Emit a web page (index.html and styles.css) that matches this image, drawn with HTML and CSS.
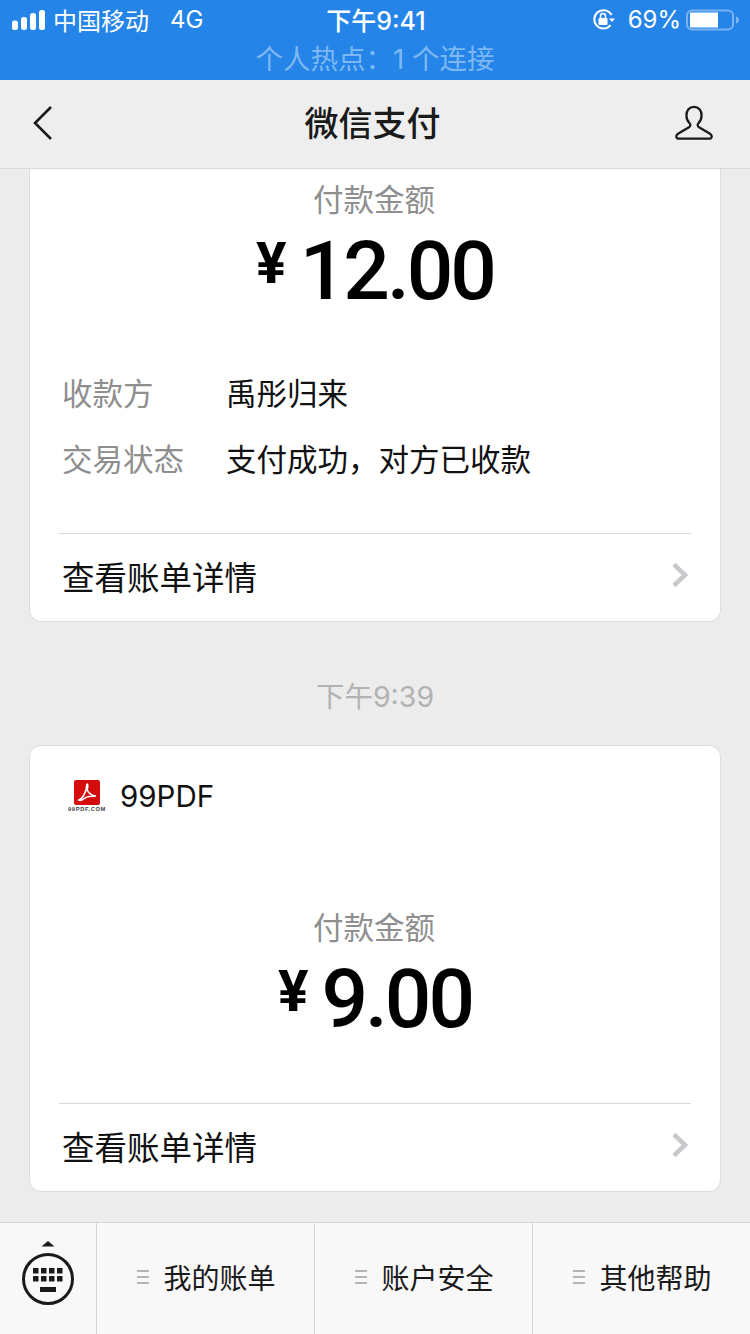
FILE: index.html
```html
<!DOCTYPE html>
<html lang="zh-CN">
<head>
    <meta charset="UTF-8">
    <meta name="viewport" content="width=device-width, initial-scale=1.0">
    <title>微信支付</title>
    <link rel="stylesheet" href="styles.css">
</head>
<body>
    <div id="phone">
        <div id="topbar">
            <div id="status">
                <div class="status-left">
                    <svg class="signal" width="34" height="24" viewBox="0 0 34 24">
                        <rect x="0" y="13.500" width="6" height="9.500" rx="2.500" fill="#fff"/>
                        <rect x="9" y="10" width="6" height="13" rx="2.500" fill="#fff"/>
                        <rect x="18" y="6" width="6" height="17" rx="2.500" fill="#fff"/>
                        <rect x="27" y="3" width="6" height="20" rx="2.500" fill="#fff"/>
                    </svg>
                    <span class="carrier">中国移动</span>
                    <span class="net">4G</span>
                </div>
                <div class="clock">下午9:41</div>
                <div class="status-right">
                    <svg class="status-icon" width="24" height="24" viewBox="0 0 24 24">
                        <path d="M18.6 17.2A9.2 9.2 0 1 1 19.6 7" fill="none" stroke="#fff" stroke-width="2"/>
                        <path d="M17 10.500h6l-3 3.600z" fill="#fff"/>
                        <rect x="6.500" y="10" width="9" height="7" rx="1" fill="#fff"/>
                        <path d="M8.500 10V8a2.500 2.500 0 0 1 5 0v2" fill="none" stroke="#fff" stroke-width="1.500"/>
                    </svg>
                    <span class="percent">69%</span>
                    <svg class="status-icon" width="54" height="24" viewBox="0 0 54 24">
                        <rect x="1" y="2.500" width="46" height="19" rx="5" fill="none" stroke="#7db4f0" stroke-width="2"/>
                        <rect x="4" y="4.500" width="28" height="15" fill="#fff"/>
                        <path d="M50 8.500c2 .6 3 1.800 3 3.500s-1 2.900-3 3.500z" fill="#7db4f0"/>
                    </svg>
                </div>
            </div>
            <div id="hotspot">个人热点：1 个连接</div>
        </div>

        <div id="nav">
            <svg class="nav-back" width="22" height="36" viewBox="0 0 22 36">
                <path d="M19 2 3 18l16 16" fill="none" stroke="#1a1a1a" stroke-width="2.600"/>
            </svg>
            <div class="nav-title">微信支付</div>
            <svg class="nav-user" width="38" height="36" viewBox="0 0 40 38">
                <path d="M20 2c-5 0-8 3.800-8 9 0 3.500 1.500 6.500 3.500 8.500 1 1 .8 3-.8 4L3.500 30c-2 1.200-2.500 3-1.800 4.500.3.700 1 1 2 1h32.600c1 0 1.700-.3 2-1 .7-1.500.2-3.300-1.800-4.500l-11.200-6.500c-1.600-1-1.800-3-.8-4C26.500 17.500 28 14.500 28 11c0-5.200-3-9-8-9z" fill="none" stroke="#1a1a1a" stroke-width="2.400"/>
            </svg>
        </div>

        <div id="messages">
            <div class="card card-cut">
                <div class="amount-block first">
                    <div class="amount-label">付款金额</div>
                    <div class="amount"><span class="yen">¥</span>12.00</div>
                </div>
                <div class="details">
                    <div class="detail-row"><span class="detail-key">收款方</span><span>禹彤归来</span></div>
                    <div class="detail-row"><span class="detail-key">交易状态</span><span>支付成功，对方已收款</span></div>
                </div>
                <div class="card-link">
                    <span>查看账单详情</span>
                    <svg width="18" height="26" viewBox="0 0 18 26"><path d="M3 2.500 14 13 3 23.500" fill="none" stroke="#c8c8cd" stroke-width="4.500"/></svg>
                </div>
            </div>

            <div class="time">下午9:39</div>

            <div class="card">
                <div class="merchant">
                    <div class="logo">
                        <svg width="26" height="25" viewBox="0 0 26 25">
                            <rect width="26" height="25" rx="2" fill="#d40c0c"/>
                            <path d="M5 20c3-1.500 5.500-5.500 7-10 .6-2 .4-6 1.200-6s.6 4 0 6c1.500 3.500 3.800 5.500 8.800 6-4.500 0-9 .6-11 2-1.800 1.400-3.700 3.300-6 2z" fill="none" stroke="#fff" stroke-width="1.600"/>
                        </svg>
                        <span class="logo-text">99PDF.COM</span>
                    </div>
                    <span class="merchant-name">99PDF</span>
                </div>
                <div class="amount-block second">
                    <div class="amount-label">付款金额</div>
                    <div class="amount"><span class="yen">¥</span>9.00</div>
                </div>
                <div class="card-link">
                    <span>查看账单详情</span>
                    <svg width="18" height="26" viewBox="0 0 18 26"><path d="M3 2.500 14 13 3 23.500" fill="none" stroke="#c8c8cd" stroke-width="4.500"/></svg>
                </div>
            </div>
        </div>

        <div id="footer">
            <div class="keyboard">
                <svg width="56" height="78" viewBox="0 0 56 78">
                    <path d="M28 1l6.500 5.500h-13z" fill="#1a1a1a"/>
                    <circle cx="28" cy="39" r="24.500" fill="none" stroke="#1a1a1a" stroke-width="3"/>
                    <g fill="#1a1a1a">
                        <rect x="13" y="28" width="5.500" height="5.500"/><rect x="21" y="28" width="5.500" height="5.500"/><rect x="29" y="28" width="5.500" height="5.500"/><rect x="37" y="28" width="5.500" height="5.500"/>
                        <rect x="13" y="36" width="5.500" height="5.500"/><rect x="21" y="36" width="5.500" height="5.500"/><rect x="29" y="36" width="5.500" height="5.500"/><rect x="37" y="36" width="5.500" height="5.500"/>
                        <rect x="20" y="47" width="16" height="5"/>
                    </g>
                </svg>
            </div>
            <div class="menu-item"><span class="menu-lines"></span>我的账单</div>
            <div class="menu-item"><span class="menu-lines"></span>账户安全</div>
            <div class="menu-item"><span class="menu-lines"></span>其他帮助</div>
        </div>
    </div>
</body>
</html>
```

FILE: styles.css
```css
body{
    margin: 0;
    background-color: #ececec;
    font-family: "Inter", "Noto Sans CJK SC", sans-serif;
    color: #111;
}
#phone{
    width: 750px;
    height: 1334px;
    display: flex;
    flex-direction: column;
    overflow: hidden;
}
#topbar{
    height: 80px;
    background-color: #2484e8;
    color: white;
}
#status{
    height: 40px;
    box-sizing: border-box;
    padding: 0 10px 2px 12px;
    display: grid;
    grid-template-columns: 1fr auto 1fr;
    align-items: center;
    font-size: 24px;
}
.status-left{
    display: flex;
    align-items: center;
}
.signal{
    margin-right: 7px;
}
.net{
    margin-left: 21px;
}
.clock{
    font-weight: 500;
    font-size: 25px;
}
.status-right{
    display: flex;
    align-items: center;
    justify-content: flex-end;
}
.status-icon{
    margin-top: 2px;
}
.percent{
    margin: 0 5px 0 12px;
    font-size: 24px;
}
#hotspot{
    height: 38px;
    text-align: center;
    font-size: 27.5px;
    line-height: 38px;
    color: #7db8f2;
}
#nav{
    height: 89px;
    flex-shrink: 0;
    box-sizing: border-box;
    background-color: #eeeeee;
    border-bottom: 1px solid #d9d9d9;
    padding: 0 37px 2px 32px;
    display: grid;
    grid-template-columns: 1fr auto 1fr;
    align-items: center;
}
.nav-user{
    justify-self: end;
}
.nav-title{
    margin-bottom: 4px;
    font-size: 34px;
    font-weight: 500;
    color: #1a1a1a;
}
#messages{
    flex: 1;
    overflow: hidden;
    padding: 0 29px;
}
.card{
    background-color: white;
    border: 1px solid #dcdcdc;
    border-radius: 12px;
}
.card-cut{
    border-top: none;
    border-radius: 0 0 12px 12px;
}
.amount-block{
    text-align: center;
}
.first{
    padding-top: 9px;
}
.second{
    padding-top: 60px;
    padding-bottom: 50px;
}
.amount-label{
    padding-right: 2px;
    font-size: 30.5px;
    line-height: 44px;
    color: #8e8e8e;
}
.amount{
    margin: -6px 0 6px;
    font-family: "Roboto", sans-serif;
    font-weight: 500;
    font-size: 82px;
    line-height: 96px;
    letter-spacing: -3px;
    color: #000;
}
.yen{
    font-size: 57px;
    font-weight: 700;
    vertical-align: 16px;
    margin-right: 16px;
}
.details{
    padding: 34px 32px 42px;
    font-size: 30.5px;
}
.detail-row{
    display: flex;
    height: 66px;
    align-items: center;
}
.detail-key{
    width: 164px;
    color: #8e8e8e;
}
.card-link{
    margin: 0 29px;
    height: 88px;
    box-sizing: border-box;
    border-top: 1px solid #d9d9d9;
    padding: 0 2px 5px 3px;
    display: flex;
    align-items: center;
    justify-content: space-between;
    font-size: 32.5px;
}
.time{
    height: 123px;
    box-sizing: border-box;
    padding-top: 22px;
    display: flex;
    align-items: center;
    justify-content: center;
    font-size: 28.5px;
    color: #b2b2b2;
}
.merchant{
    height: 100px;
    padding-left: 37px;
    display: flex;
    align-items: center;
}
.logo{
    width: 40px;
    display: flex;
    flex-direction: column;
    align-items: center;
}
.logo-text{
    margin-top: 1px;
    font-family: "Liberation Sans", sans-serif;
    font-size: 5.8px;
    font-weight: 700;
    letter-spacing: 0.6px;
    color: #444;
    white-space: nowrap;
}
.merchant-name{
    margin-left: 13px;
    font-size: 29.5px;
}
#footer{
    height: 112px;
    flex-shrink: 0;
    box-sizing: border-box;
    background-color: #f8f8f8;
    border-top: 1px solid #d6d6d6;
    display: grid;
    grid-template-columns: 96px 218px 218px 1fr;
}
.keyboard{
    display: flex;
    align-items: center;
    justify-content: center;
}
.menu-item{
    border-left: 1px solid #d6d6d6;
    padding: 0 0 3px 2px;
    display: flex;
    align-items: center;
    justify-content: center;
    font-size: 28px;
    color: #1a1a1a;
}
.menu-lines{
    width: 12px;
    height: 14px;
    margin-right: 14px;
    border-top: 2px solid #b5b5b5;
    border-bottom: 2px solid #b5b5b5;
    box-sizing: border-box;
    background: linear-gradient(#b5b5b5, #b5b5b5) center / 100% 2px no-repeat;
}
```
